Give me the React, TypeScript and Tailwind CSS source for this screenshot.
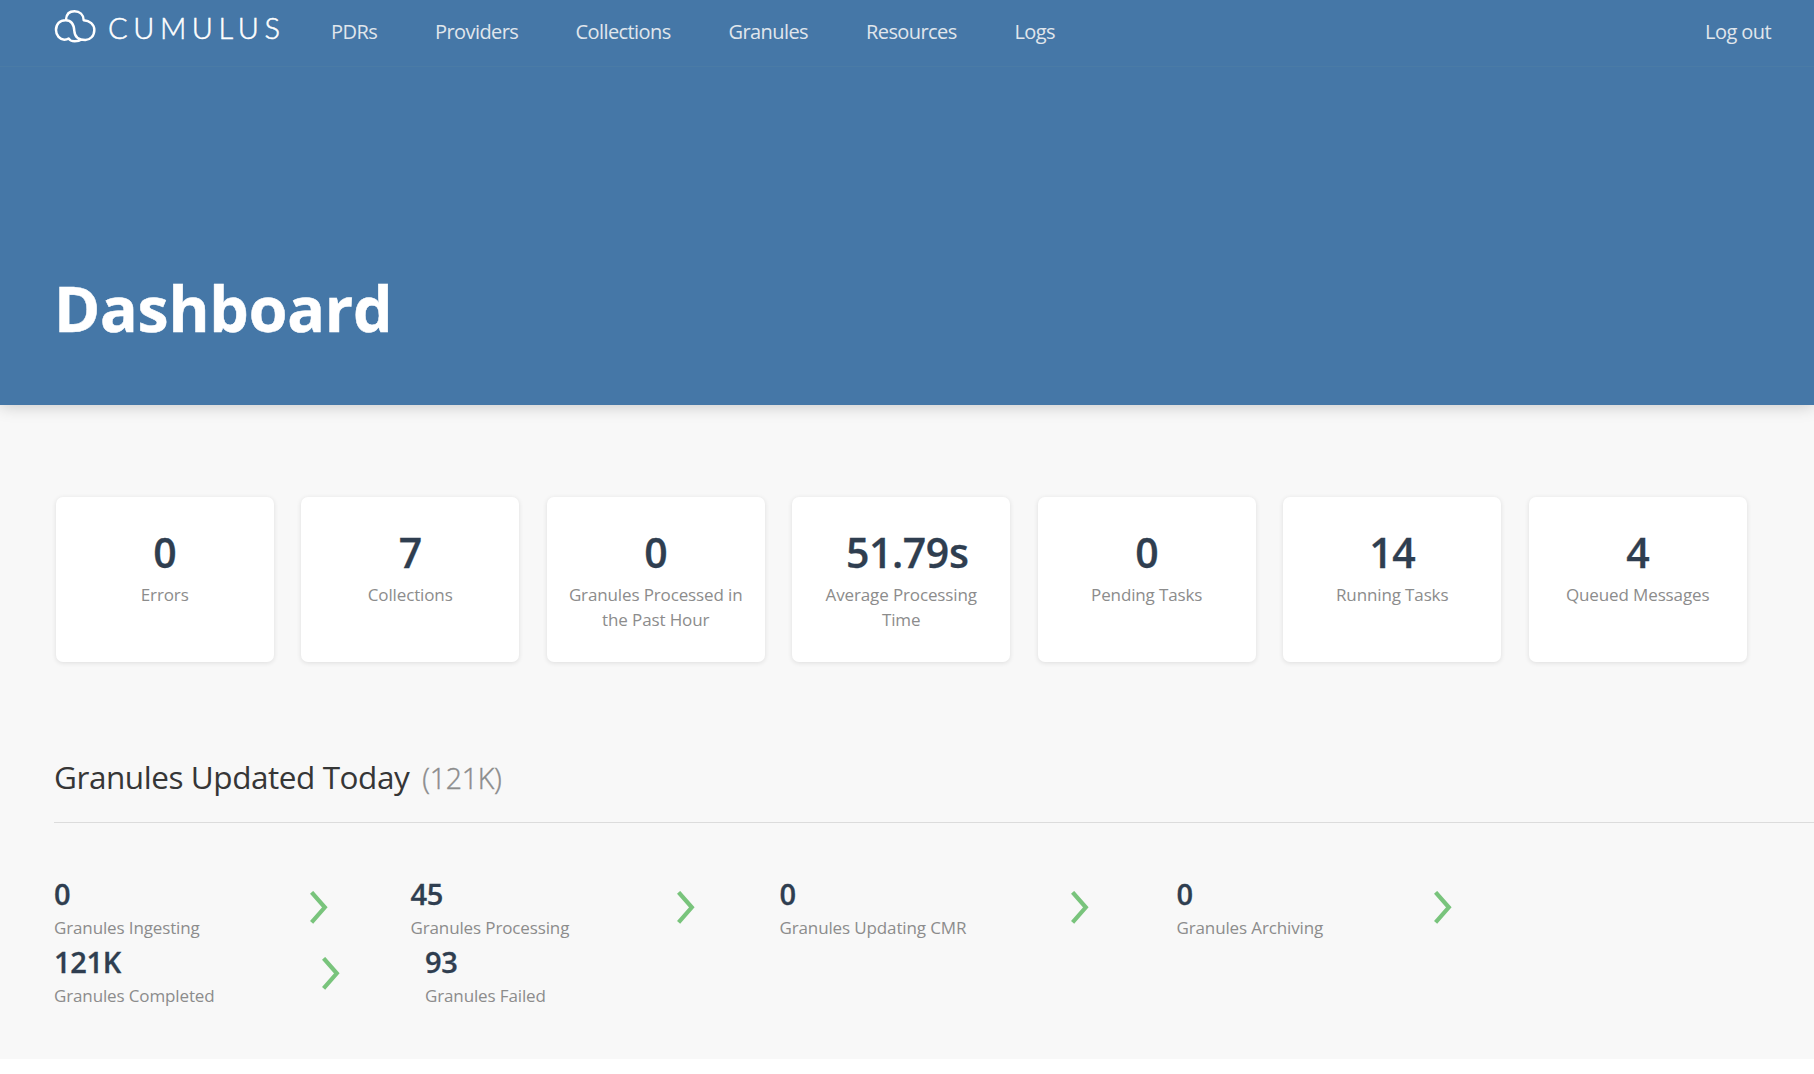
const navItems = [
  { label: "PDRs", width: "w-[104px]" },
  { label: "Providers", width: "w-[140.5px]" },
  { label: "Collections", width: "w-[153px]" },
  { label: "Granules", width: "w-[137.5px]" },
  { label: "Resources", width: "w-[148.5px]" },
  { label: "Logs", width: "w-[60px]" },
];

const cards = [
  { value: "0", label: "Errors" },
  { value: "7", label: "Collections" },
  { value: "0", label: "Granules Processed in the Past Hour" },
  { value: "51.79s", label: "Average Processing Time", shift: "pl-3" },
  { value: "0", label: "Pending Tasks" },
  { value: "14", label: "Running Tasks" },
  { value: "4", label: "Queued Messages" },
];

type Stat = { value: string; label: string; width: string; gap: string };

const firstRow: Stat[] = [
  { value: "0", label: "Granules Ingesting", width: "w-[255.5px]", gap: "mr-[83px]" },
  { value: "45", label: "Granules Processing", width: "w-[266.5px]", gap: "mr-[84.5px]" },
  { value: "0", label: "Granules Updating CMR", width: "w-[291px]", gap: "mr-[88px]" },
  { value: "0", label: "Granules Archiving", width: "w-[257px]", gap: "mr-0" },
];

const secondRow: Stat[] = [
  { value: "121K", label: "Granules Completed", width: "w-[268px]", gap: "mr-[85px]" },
  { value: "93", label: "Granules Failed", width: "w-[200px]", gap: "mr-0" },
];

function CloudLogo() {
  return (
    <svg width="42" height="34" viewBox="0 0 126 102" fill="none" stroke="#fff" strokeWidth="7.4" strokeLinecap="round" strokeLinejoin="round">
      <path d="M36 32 C37 16 47 7 61.500 7 C77 7 88.500 17 89 33.500 C107 35 121 46 121 63 C121 81 108 93 94 93 C72 93 62 83 61 66 C60 47 54 33.500 35 33.500 C17 33.500 6 46 6 63 C6 80 18 91.500 31 92 C37 92 41 90.500 44 88.500 C47 94 54 97 62 97 C70 97 77 95.500 81 91.500" />
    </svg>
  );
}

function Chevron() {
  return (
    <svg width="18" height="33" viewBox="0 0 18 33" fill="none" stroke="#79c47c" strokeWidth="4.200" className="shrink-0">
      <path d="M1.600 1.300 L14.800 16.300 L1.600 31.300" />
    </svg>
  );
}

function StatRow({ items, chevronTop }: { items: Stat[]; chevronTop: string }) {
  return (
    <div className="flex h-[68px]">
      {items.map((s, i) => (
        <div key={s.label} className={`flex ${s.gap}`}>
          <div className={`${s.width} shrink-0 whitespace-nowrap`}>
            <div className="text-[29px] leading-[30px] font-semibold tracking-[-0.3px] text-[#2f3e50] [-webkit-text-stroke:0.3px_#2f3e50]">{s.value}</div>
            <div className="mt-1.5 text-[17px] leading-[25px] tracking-[-0.13px] text-[#8c8c8c]">{s.label}</div>
          </div>
          {(items.length === 4 || i === 0) && (
            <div className={chevronTop}>
              <Chevron />
            </div>
          )}
        </div>
      ))}
    </div>
  );
}

export default function App() {
  return (
    <div className="h-[1074px] w-full overflow-hidden bg-white font-['Open_Sans',sans-serif]">
      <div className="h-[1059px] bg-[#f8f8f8]">
        <header className="h-[405.400px] bg-[#4577a7] shadow-[0_1px_16px_rgba(0,0,0,0.2)]">
          <div className="flex h-[67px] items-start border-b border-[#4a7ba6] pl-[54px]">
            <div className="flex w-[277px] items-start pt-[9px] text-white">
              <CloudLogo />
              <span className="mt-1 ml-3 font-['Lato',sans-serif] text-[29px] leading-[30px] font-light tracking-[5.6px] [-webkit-text-stroke:0.5px_white]">
                CUMULUS
              </span>
            </div>
            <nav className="flex flex-1 pt-[20.500px] text-[20px] leading-[21px] tracking-[-0.58px] whitespace-nowrap text-[#e0e6ec]">
              {navItems.map((n) => (
                <a key={n.label} className={n.width}>{n.label}</a>
              ))}
              <a className="mr-[43px] ml-auto">Log out</a>
            </nav>
          </div>
          <h1 className="mt-[209px] pl-[54px] text-[62.500px] leading-[64px] font-bold tracking-[-0.2px] text-white [-webkit-text-stroke:0.5px_white]">Dashboard</h1>
        </header>

        <section className="mt-[91.600px] ml-[55.700px] flex gap-[27.500px]">
          {cards.map((c) => (
            <div
              key={c.label}
              className="h-[165.500px] w-[218px] shrink-0 rounded-[7px] bg-white px-5 pt-[35px] text-center shadow-[0_1px_5px_rgba(0,0,0,0.11)]"
            >
              <div className={`text-[41px] leading-[41px] font-semibold tracking-[-0.4px] text-[#2f3e50] [-webkit-text-stroke:0.3px_#2f3e50] ${c.shift ?? ""}`}>{c.value}</div>
              <div className="mt-[9px] text-[17px] leading-[25px] tracking-[-0.13px] text-[#8c8c8c]">{c.label}</div>
            </div>
          ))}
        </section>

        <section className="mt-[93.500px] ml-[54px]">
          <div className="flex h-[67px] items-baseline border-b border-[#dcdcdc] whitespace-nowrap">
            <h2 className="text-[31.500px] leading-[41px] tracking-[-0.44px] text-[#363636]">Granules Updated Today</h2>
            <span className="ml-[13px] text-[28.500px] leading-[40px] font-light tracking-[-0.3px] text-[#8c8c8c] [-webkit-text-stroke:0.4px_#8c8c8c]">(121K)</span>
          </div>
          <div className="pt-14">
            <StatRow items={firstRow} chevronTop="pt-3" />
            <StatRow items={secondRow} chevronTop="pt-2.5" />
          </div>
        </section>
      </div>
    </div>
  );
}
